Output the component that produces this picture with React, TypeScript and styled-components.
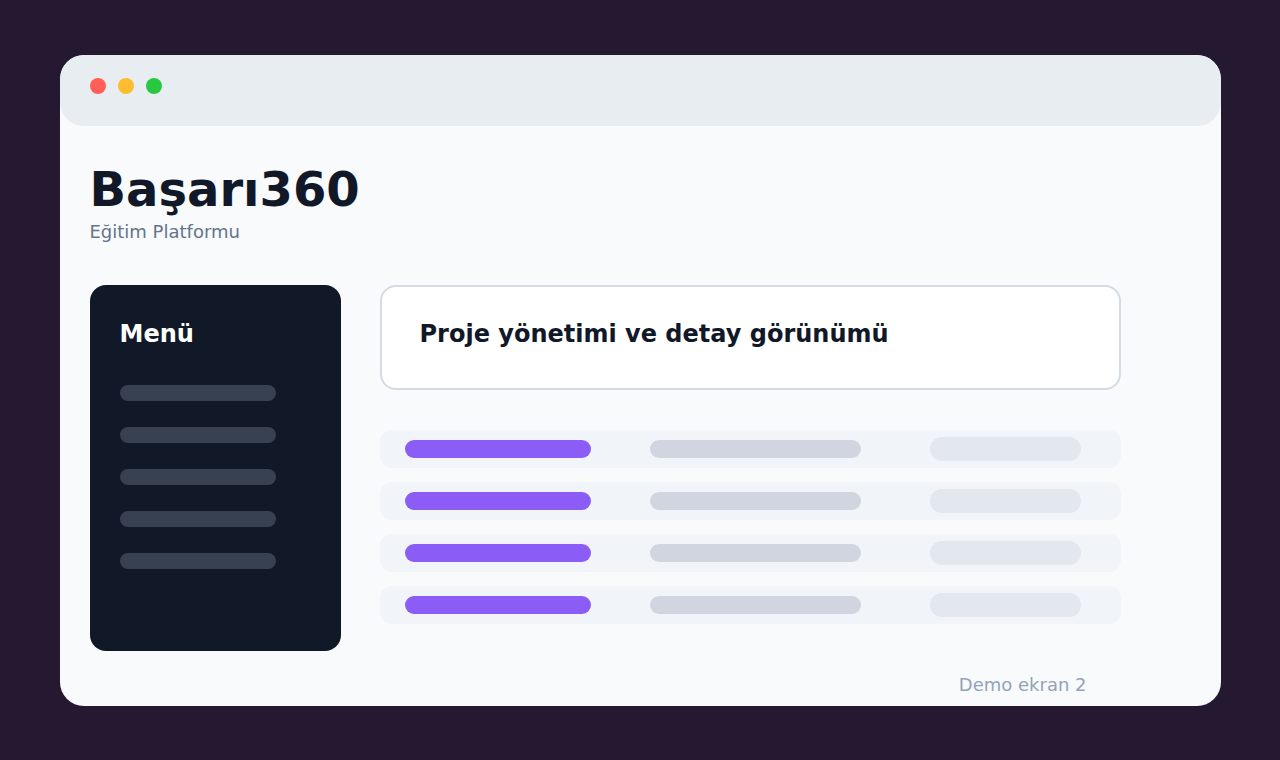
import React from "react";
import styled, { createGlobalStyle } from "styled-components";

const Global = createGlobalStyle`
  html, body { margin: 0; padding: 0; }
  body {
    background: #251831;
    font-family: "DejaVu Sans", "Noto Sans", sans-serif;
    width: 1280px;
    height: 760px;
    overflow: hidden;
  }
`;

const Page = styled.div`
  width: 1280px;
  height: 760px;
  display: flex;
  align-items: center;
  justify-content: center;
`;

const Window = styled.div`
  width: 1161px;
  height: 651px;
  background: #f8fafc;
  border-radius: 24px;
  overflow: hidden;
  display: flex;
  flex-direction: column;
`;

const TitleBar = styled.div`
  height: 71px;
  box-sizing: border-box;
  background: #e8edf2;
  border-radius: 24px;
  padding: 23px 30px 0;
  display: flex;
  align-items: flex-start;
  gap: 12px;
`;

const Dot = styled.span<{ $c: string }>`
  width: 16px;
  height: 16px;
  border-radius: 50%;
  background: ${(p) => p.$c};
`;

const Body = styled.div`
  padding: 0 30px;
  display: flex;
  flex-direction: column;
`;

const Title = styled.h1`
  margin: 35px 0 0;
  font-size: 48px;
  line-height: 56px;
  font-weight: 700;
  color: #111827;
`;

const Subtitle = styled.div`
  margin-top: 4px;
  font-size: 18px;
  line-height: 21px;
  color: #64748b;
`;

const Layout = styled.div`
  margin-top: 43px;
  display: flex;
  align-items: flex-start;
  gap: 39px;
`;

const Sidebar = styled.aside`
  width: 251px;
  height: 366px;
  box-sizing: border-box;
  background: #111827;
  border-radius: 16px;
  padding: 35px 30px;
`;

const SideTitle = styled.div`
  font-size: 24px;
  line-height: 28px;
  font-weight: 700;
  color: #ffffff;
`;

const MenuList = styled.div`
  margin-top: 37px;
  display: flex;
  flex-direction: column;
  gap: 26px;
`;

const MenuBar = styled.div`
  width: 156px;
  height: 16px;
  border-radius: 8px;
  background: #374151;
`;

const Main = styled.div`
  width: 741px;
  display: flex;
  flex-direction: column;
`;

const Card = styled.div`
  height: 105px;
  box-sizing: border-box;
  background: #ffffff;
  border: 2px solid #d5dbe3;
  border-radius: 16px;
  padding: 33px 38px 0;
`;

const CardTitle = styled.div`
  font-size: 24px;
  line-height: 28px;
  font-weight: 700;
  color: #111827;
`;

const Rows = styled.div`
  margin-top: 40px;
  display: flex;
  flex-direction: column;
  gap: 14px;
`;

const Row = styled.div`
  height: 38px;
  box-sizing: border-box;
  background: #f1f5f9;
  border-radius: 12px;
  padding: 0 40px 0 25px;
  display: grid;
  grid-template-columns: 245px 280px 1fr;
  align-items: center;
`;

const Pill = styled.div<{ $w: number; $h: number; $c: string }>`
  width: ${(p) => p.$w}px;
  height: ${(p) => p.$h}px;
  border-radius: ${(p) => p.$h / 2}px;
  background: ${(p) => p.$c};
`;

const Footer = styled.div`
  margin-top: 23px;
  display: flex;
  justify-content: flex-end;
  padding-right: 104px;
  font-size: 18px;
  line-height: 21px;
  color: #94a3b8;
`;

export default function App() {
  return (
    <>
      <Global />
      <Page>
        <Window>
          <TitleBar>
            <Dot $c="#ff5f57" />
            <Dot $c="#febc2e" />
            <Dot $c="#28c840" />
          </TitleBar>
          <Body>
            <Title>Başarı360</Title>
            <Subtitle>Eğitim Platformu</Subtitle>
            <Layout>
              <Sidebar>
                <SideTitle>Menü</SideTitle>
                <MenuList>
                  {[0, 1, 2, 3, 4].map((i) => (
                    <MenuBar key={i} />
                  ))}
                </MenuList>
              </Sidebar>
              <Main>
                <Card>
                  <CardTitle>Proje yönetimi ve detay görünümü</CardTitle>
                </Card>
                <Rows>
                  {[0, 1, 2, 3].map((i) => (
                    <Row key={i}>
                      <Pill $w={186} $h={18} $c="#8b5cf6" />
                      <Pill $w={211} $h={18} $c="#d0d5df" />
                      <Pill $w={151} $h={24} $c="#e3e7ee" />
                    </Row>
                  ))}
                </Rows>
              </Main>
            </Layout>
            <Footer>Demo ekran 2</Footer>
          </Body>
        </Window>
      </Page>
    </>
  );
}
